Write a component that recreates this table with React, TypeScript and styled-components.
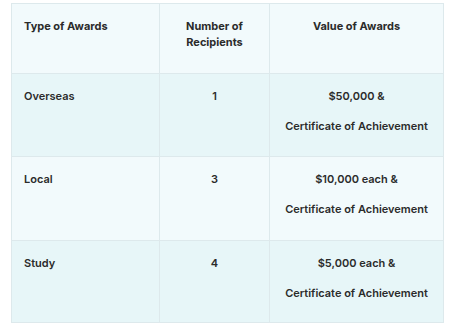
import React from 'react';
import styled, { createGlobalStyle } from 'styled-components';

const GlobalStyle = createGlobalStyle`
  body {
    margin: 0;
    background: #ffffff;
    font-family: Inter, "Noto Sans", sans-serif;
  }
`;

const Wrapper = styled.div`
  padding: 3px 0 0 11px;
`;

const Table = styled.table`
  width: 432px;
  border-collapse: collapse;
  table-layout: fixed;
  border: 1px solid #e1e6e8;
  font-size: 11px;
  line-height: 16px;
  font-weight: 600;
  color: #2b2b2b;
`;

const Row = styled.tr<{ $tint: boolean; $h: number }>`
  height: ${p => p.$h}px;
  background: ${p => (p.$tint ? '#e7f6f8' : '#f2fafc')};
`;

const Cell = styled.td<{ $align?: 'left' | 'center' }>`
  vertical-align: top;
  padding: 14px 12px 0 12px;
  text-align: ${p => p.$align || 'left'};
  border: 1px solid #dde9ec;
`;

const HeadCell = styled(Cell).attrs({ as: 'th' })`
  font-weight: 700;
`;

const Line = styled.div`
  & + & {
    margin-top: 14px;
  }
`;

type Award = {
  type: string;
  count: number;
  value: string;
};

const awards: Award[] = [
  { type: 'Overseas', count: 1, value: '$50,000 &' },
  { type: 'Local', count: 3, value: '$10,000 each &' },
  { type: 'Study', count: 4, value: '$5,000 each &' },
];

const heights = [83, 84, 82];

export default function App() {
  return (
    <Wrapper>
      <GlobalStyle />
      <Table>
        <colgroup>
          <col style={{ width: 148 }} />
          <col style={{ width: 110 }} />
          <col style={{ width: 174 }} />
        </colgroup>
        <thead>
          <Row $tint={false} $h={70}>
            <HeadCell>Type of Awards</HeadCell>
            <HeadCell $align="center">
              Number of
              <br />
              Recipients
            </HeadCell>
            <HeadCell $align="center">Value of Awards</HeadCell>
          </Row>
        </thead>
        <tbody>
          {awards.map((a, i) => (
            <Row key={a.type} $tint={i % 2 === 0} $h={heights[i]}>
              <Cell>{a.type}</Cell>
              <Cell $align="center">{a.count}</Cell>
              <Cell $align="center">
                <Line>{a.value}</Line>
                <Line>Certificate of Achievement</Line>
              </Cell>
            </Row>
          ))}
        </tbody>
      </Table>
    </Wrapper>
  );
}
